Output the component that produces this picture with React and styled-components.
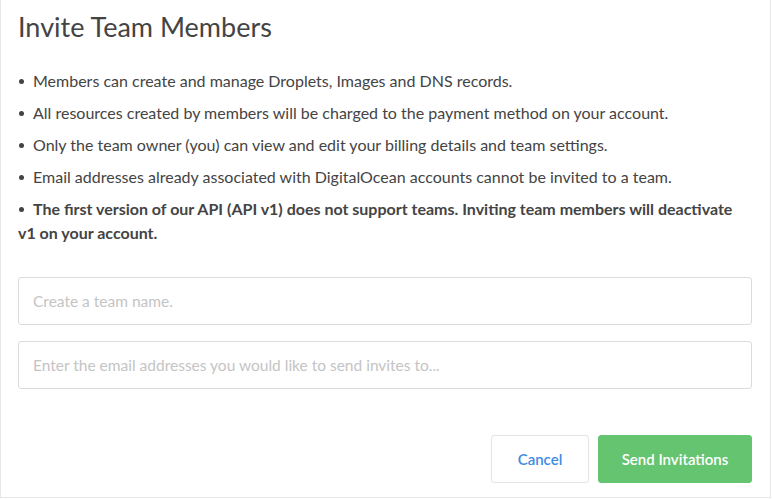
import React from "react";
import styled, { createGlobalStyle } from "styled-components";

const Global = createGlobalStyle`
  html, body { margin: 0; padding: 0; background: #fff; }
  * { box-sizing: border-box; }
`;

const Modal = styled.div`
  width: 771px;
  height: 498px;
  border: 1px solid #e6e6e6;
  border-top: none;
  padding: 10px 18px 0 17px;
  font-family: Lato, "Open Sans", sans-serif;
  color: #444;
`;

const Title = styled.h1`
  margin: 0;
  font-weight: 400;
  font-size: 27px;
  line-height: 34px;
  color: #444;
`;

const List = styled.ul`
  margin: 25px 0 0;
  padding: 0;
  list-style: none;
`;

const Item = styled.li`
  font-size: 16px;
  line-height: 24px;
  margin-bottom: 8px;
  font-weight: ${(p) => (p.$bold ? 700 : 400)};
  &::before {
    content: "";
    display: inline-block;
    width: 5px;
    height: 5px;
    border-radius: 50%;
    background: #444;
    margin: 0 9px 3px 1px;
    vertical-align: middle;
  }
`;

const Input = styled.input`
  display: block;
  width: 100%;
  height: 48px;
  border: 1px solid #dcdcdc;
  border-radius: 3px;
  padding: 0 14px;
  font-family: Lato, "Open Sans", sans-serif;
  font-size: 15.5px;
  margin-top: ${(p) => p.$mt}px;
  &::placeholder { color: #c4c4c4; }
`;

const Actions = styled.div`
  display: flex;
  justify-content: flex-end;
  gap: 9px;
  margin-top: 46px;
`;

const Button = styled.button`
  height: 48px;
  border-radius: 3px;
  font-family: Lato, "Open Sans", sans-serif;
  font-size: 15px;
  font-weight: 600;
  padding: 0;
  width: ${(p) => p.$w}px;
  border: 1px solid ${(p) => (p.$primary ? "#65c470" : "#e4e4e4")};
  background: ${(p) => (p.$primary ? "#65c470" : "#fff")};
  color: ${(p) => (p.$primary ? "#fff" : "#3f8ce0")};
`;

export default function App() {
  return (
    <>
      <Global />
      <Modal>
        <Title>Invite Team Members</Title>
        <List>
          <Item>Members can create and manage Droplets, Images and DNS records.</Item>
          <Item>All resources created by members will be charged to the payment method on your account.</Item>
          <Item>Only the team owner (you) can view and edit your billing details and team settings.</Item>
          <Item>Email addresses already associated with DigitalOcean accounts cannot be invited to a team.</Item>
          <Item $bold>The first version of our API (API v1) does not support teams. Inviting team members will deactivate v1 on your account.</Item>
        </List>
        <Input $mt={32} placeholder="Create a team name." />
        <Input $mt={16} placeholder="Enter the email addresses you would like to send invites to..." />
        <Actions>
          <Button $w={98}>Cancel</Button>
          <Button $primary $w={154}>Send Invitations</Button>
        </Actions>
      </Modal>
    </>
  );
}
